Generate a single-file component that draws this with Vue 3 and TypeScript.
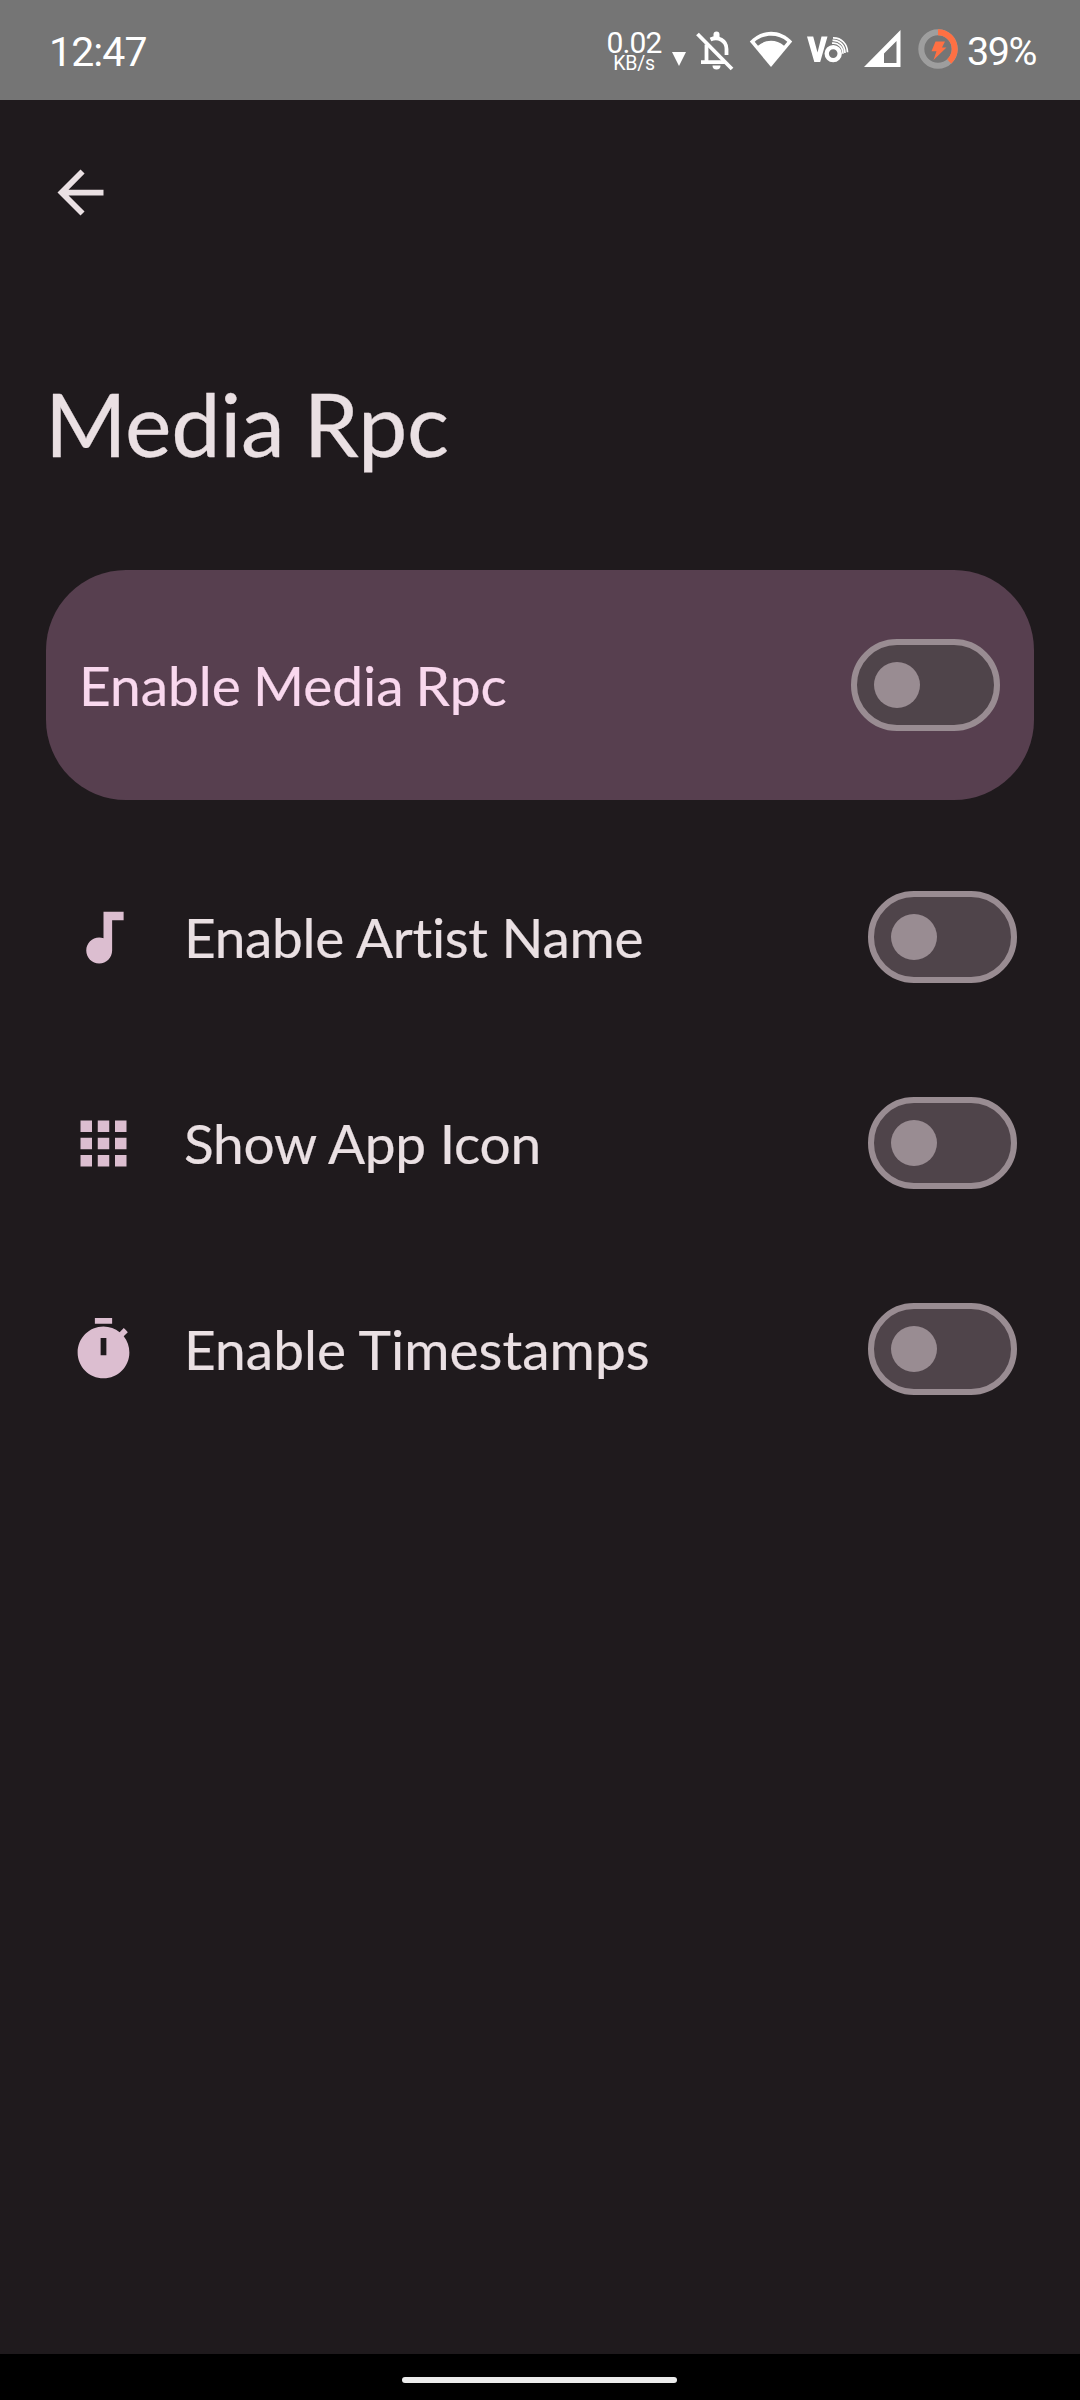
<script setup lang="ts">
import { ref } from 'vue'

interface Option {
  id: string
  label: string
  icon: string
  enabled: boolean
  spacing: string
}

const master = ref(false)

const options = ref<Option[]>([
  {
    id: 'artist',
    label: 'Enable Artist Name',
    icon: 'M12 3v9.26c-.5-.17-1-.26-1.5-.26C8 12 6 14 6 16.5S8 21 10.5 21s4.5-2 4.5-4.5V6h4V3h-7z',
    enabled: false,
    spacing: '-0.3px',
  },
  {
    id: 'app-icon',
    label: 'Show App Icon',
    icon: 'M4 8h4V4H4v4zm6 12h4v-4h-4v4zm-6 0h4v-4H4v4zm0-6h4v-4H4v4zm6 0h4v-4h-4v4zm6-10v4h4V4h-4zm-6 4h4V4h-4v4zm6 6h4v-4h-4v4zm0 6h4v-4h-4v4z',
    enabled: false,
    spacing: '-0.25px',
  },
  {
    id: 'timestamps',
    label: 'Enable Timestamps',
    icon: 'M9 1h6v2H9zM19.03 7.39l1.42-1.42c-.43-.51-.9-.99-1.41-1.41l-1.42 1.42C16.07 4.74 14.12 4 12 4c-4.97 0-9 4.03-9 9s4.02 9 9 9 9-4.03 9-9c0-2.12-.74-4.07-1.97-5.61zM13 14h-2V8h2v6z',
    enabled: false,
    spacing: '0.05px',
  },
])
</script>

<template>
  <div class="screen">
    <header class="status">
      <span class="clock">12:47</span>
      <div class="tray">
        <div class="speed">
          <span class="rate">0.02</span>
          <span class="unit">KB/s</span>
        </div>
        <svg class="down" viewBox="0 0 14 14"><path d="M0 0h14L7 14z" fill="#fff" /></svg>
        <svg class="bell" viewBox="0 0 38 40" fill="none" stroke="#fff">
          <path d="M1.5 3 36 38" stroke-width="3.8" />
          <path d="M10.500 13.500V31M5 31.200H29" stroke-width="3.800" />
          <path d="M14.500 8.500C22 5 30.500 9.500 30.500 18V24" stroke-width="3.800" />
          <path d="M17.500 6V3.500a3 3 0 0 1 6 0V6z" fill="#fff" stroke="none" />
          <path d="M16.500 34.500h8a4 4 0 0 1-8 0z" fill="#fff" stroke="none" />
        </svg>
        <svg class="wifi" viewBox="0 0 44 37">
          <path d="M22 36 .8 10.500C13 -2.500 31 -2.500 43.200 10.500z" fill="#fff" />
          <path d="M5.700 10.700C14.500 2.800 29.500 2.800 38.300 10.700L35 14.800C27.500 8.200 16.500 8.200 9 14.800z" fill="#757575" />
        </svg>
        <svg class="volte" viewBox="0 0 42 28" fill="none" stroke="#fff">
          <path d="M0 .5h6.200L10.500 16.500 14.500 .5h6L13.200 26H7.300z" fill="#fff" stroke="none" />
          <circle cx="26.200" cy="17.600" r="6.500" stroke-width="4.400" />
          <path d="M25 7.200c6-1 11 4 11 10.500M25.500 4.400c7-.6 12.300 5 12.500 12.500M26 1.800c8.500-.2 14.500 6.500 14.500 14.500" stroke-width="1.700" />
        </svg>
        <svg class="signal" viewBox="0 0 37 37">
          <path fill="#fff" fill-rule="evenodd" d="M36.500 0V37H0zM32.500 11 20 23.500V33h12.500z" />
        </svg>
        <svg class="battery" viewBox="0 0 40 40" fill="none">
          <circle cx="20" cy="20" r="16.700" stroke="#9e9e9e" stroke-width="6" />
          <path d="M20 3.300A16.700 16.700 0 0 1 31.200 32.400" stroke="#ff7043" stroke-width="6" />
          <path d="M17.500 12.500h9.500l-3 6h4.500L15.500 31l3-8.700h-5z" fill="#ff7043" />
        </svg>
        <span class="percent">39%</span>
      </div>
    </header>

    <main class="content">
      <button class="back" aria-label="Back">
        <svg viewBox="0 0 24 24"><path d="M20 11H7.830l5.590-5.590L12 4l-8 8 8 8 1.410-1.410L7.830 13H20v-2z" fill="#eae0e3" /></svg>
      </button>
      <h1 class="title">Media Rpc</h1>

      <section class="card" @click="master = !master">
        <span class="label">Enable Media Rpc</span>
        <span class="switch" :class="{ on: master }"><i class="thumb" /></span>
      </section>

      <section v-for="o in options" :key="o.id" class="row" @click="o.enabled = !o.enabled">
        <svg class="icon" viewBox="0 0 24 24"><path :d="o.icon" fill="#dcbed0" /></svg>
        <span class="label" :style="{ letterSpacing: o.spacing }">{{ o.label }}</span>
        <span class="switch" :class="{ on: o.enabled }"><i class="thumb" /></span>
      </section>
    </main>

    <footer class="nav"><span class="handle" /></footer>
  </div>
</template>

<style>
body {
  margin: 0;
  background: #1f1a1d;
}
</style>

<style scoped>
.screen {
  display: flex;
  flex-direction: column;
  width: 1080px;
  height: 2400px;
  overflow: hidden;
  background: #1f1a1d;
  color: #eae0e3;
  font-family: Lato, sans-serif;
}
svg {
  display: block;
  flex: none;
}
.status {
  display: flex;
  justify-content: space-between;
  height: 100px;
  flex: none;
  padding: 0 43px 0 49px;
  background: #757575;
  color: #fff;
  font-family: Roboto, sans-serif;
}
.clock {
  margin-top: 28px;
  font-size: 41px;
  line-height: 48px;
  letter-spacing: -0.9px;
}
.tray {
  display: flex;
  align-items: flex-start;
}
.speed {
  display: flex;
  flex-direction: column;
  align-items: center;
  width: 56px;
  margin-top: 28px;
}
.rate {
  font-size: 30px;
  line-height: 29px;
  letter-spacing: -0.9px;
}
.unit {
  font-size: 19.5px;
  line-height: 14px;
  letter-spacing: -0.2px;
}
.down { width: 14px; height: 14px; margin: 52px 0 0 10px; }
.bell { width: 38px; height: 40px; margin: 31px 0 0 10px; }
.wifi { width: 44px; height: 37px; margin: 31px 0 0 15px; }
.volte { width: 42px; height: 28px; margin: 36px 0 0 14px; }
.signal { width: 37px; height: 37px; margin: 30px 0 0 15px; }
.battery { width: 40px; height: 40px; margin: 29px 0 0 17px; }
.percent {
  width: 70px;
  margin: 29px 0 0 9px;
  font-size: 39.5px;
  line-height: 46px;
  letter-spacing: -1.4px;
  white-space: nowrap;
}
.content {
  display: flex;
  flex-direction: column;
  flex: 1;
}
.back {
  width: 69px;
  height: 69px;
  margin: 58px 0 0 46px;
  padding: 0;
  border: 0;
  background: none;
}
.title {
  margin: 142px 0 0 45px;
  height: 108px;
  font-size: 88px;
  line-height: 108px;
  font-weight: 400;
  letter-spacing: -0.3px;
  word-spacing: -3px;
  white-space: nowrap;
  -webkit-text-stroke: 0.3px currentColor;
}
.card {
  display: flex;
  align-items: center;
  justify-content: space-between;
  box-sizing: border-box;
  height: 230px;
  margin: 93px 46px 0;
  padding: 0 34px 0 33px;
  border-radius: 80px;
  background: #573f4f;
  color: #f9d8ee;
}
.card + .row {
  margin-top: 34px;
}
.label {
  font-size: 55px;
  line-height: 72px;
  white-space: nowrap;
  -webkit-text-stroke: 0.2px currentColor;
}
.card .label {
  word-spacing: -2px;
}
.row {
  display: flex;
  align-items: center;
  height: 206px;
  padding: 0 63px 0 69px;
}
.icon {
  width: 69px;
  height: 69px;
}
.row .label {
  flex: 1;
  margin-left: 46px;
}
.switch {
  display: flex;
  align-items: center;
  flex: none;
  box-sizing: border-box;
  width: 149px;
  height: 92px;
  padding: 0 17px;
  border: 6px solid #998c92;
  border-radius: 46px;
  background: #4f444a;
}
.switch.on {
  justify-content: flex-end;
}
.thumb {
  width: 46px;
  height: 46px;
  border-radius: 50%;
  background: #998c92;
}
.nav {
  display: flex;
  justify-content: center;
  flex: none;
  height: 46px;
  padding-right: 1px;
  background: #000;
}
.handle {
  width: 275px;
  height: 6px;
  margin-top: 23px;
  border-radius: 3px;
  background: #ececec;
}
</style>
